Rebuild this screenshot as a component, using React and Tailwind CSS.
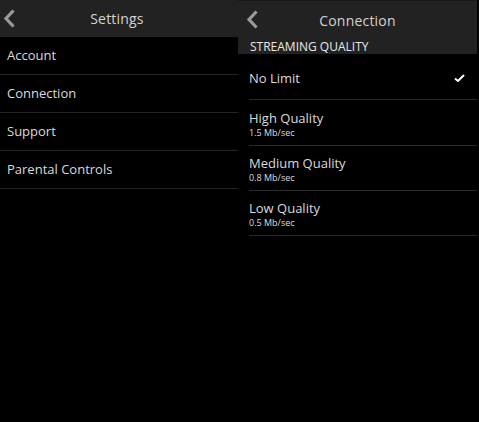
import React from 'react';

const Chevron = () => (
  <svg width="12" height="19" viewBox="0 0 12 19" fill="none">
    <path d="M10.5 1.5 L3 9.5 L10.5 17.5" stroke="#9a9a9a" strokeWidth="3.2" strokeLinecap="butt" strokeLinejoin="miter" />
  </svg>
);

const Header = ({ title, chevronLeft, shift }) => (
  <div className="relative h-[37px] flex items-center justify-center">
    <div className={`absolute top-[9px] ${chevronLeft}`}>
      <Chevron />
    </div>
    <span className={`text-[14px] tracking-[0.2px] text-[#d2d2d2] ${shift}`}>{title}</span>
  </div>
);

const settings = ['Account', 'Connection', 'Support', 'Parental Controls'];

const qualities = [
  { name: 'No Limit', checked: true, h: 'h-[46px]' },
  { name: 'High Quality', rate: '1.5 Mb/sec', h: 'h-[46px]' },
  { name: 'Medium Quality', rate: '0.8 Mb/sec', h: 'h-[45px]' },
  { name: 'Low Quality', rate: '0.5 Mb/sec', h: 'h-[45px]' },
];

export default function App() {
  return (
    <div className="w-[479px] h-[422px] bg-black flex" style={{ fontFamily: '"Open Sans", "Noto Sans", sans-serif' }}>
      {/* Settings panel */}
      <div className="w-[238px] shrink-0">
        <div className="bg-[#222222]">
          <Header title="Settings" chevronLeft="left-[3px]" shift="mr-[4px]" />
        </div>
        {settings.map((s) => (
          <div key={s} className="h-[38px] border-b border-[#252525] flex items-center pl-[7px]">
            <span className="text-[13px] text-[#dadada]">{s}</span>
          </div>
        ))}
      </div>

      {/* Connection panel */}
      <div className="w-[239px] shrink-0">
        <div className="bg-[#222222] h-[54px] border-t border-[#181818]">
          <Header title="Connection" chevronLeft="left-[8px]" shift="mt-[1px]" />
          <div className="pl-[12px] pt-[1px] text-[12px] leading-[15px] text-[#e8e8e8]">STREAMING QUALITY</div>
        </div>
        <div className="pl-[11px]">
          {qualities.map((q) => (
            <div
              key={q.name}
              className={`${q.h} border-b border-[#2a2a2a] flex items-center justify-between pr-[12px]`}
            >
              <div className="flex flex-col pt-[2px]">
                <span className="text-[13px] leading-[18px] text-[#dadada]">{q.name}</span>
                {q.rate && <span className="text-[9px] leading-[12px] text-[#dcdcdc]">{q.rate}</span>}
              </div>
              {q.checked && (
                <svg width="11" height="8" viewBox="0 0 11 8" fill="none" className="mt-[3px]">
                  <path d="M1 4.5 L4 7 L10 1" stroke="#ffffff" strokeWidth="2" />
                </svg>
              )}
            </div>
          ))}
        </div>
      </div>
    </div>
  );
}
